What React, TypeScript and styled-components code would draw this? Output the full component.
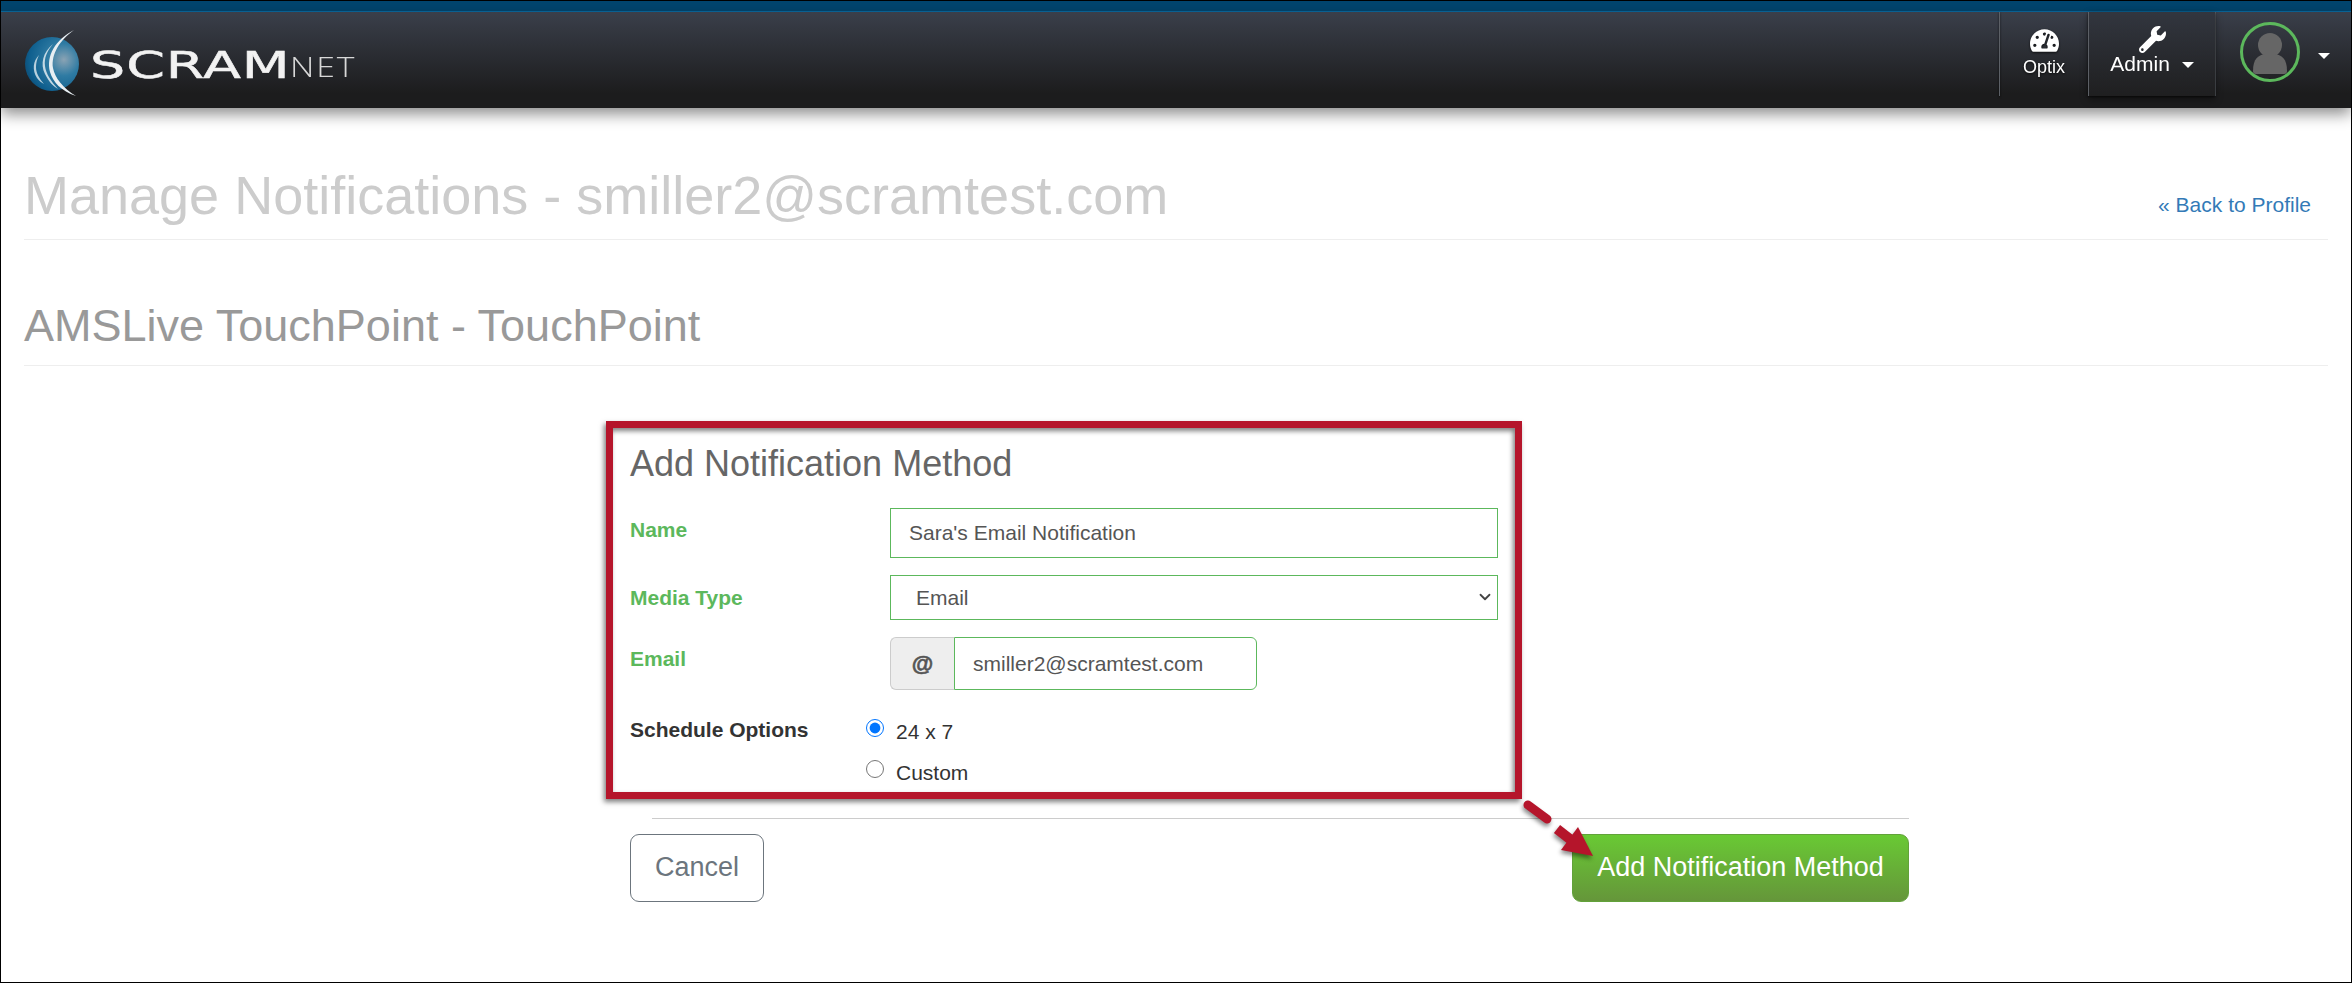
import { ChevronDown } from "lucide-react";
import { FaTachometerAlt, FaWrench } from "react-icons/fa";
import styled, { createGlobalStyle } from "styled-components";

const Global = createGlobalStyle`
  html, body {
    margin: 0;
    height: 100%;
    background: #fff;
    overflow: hidden;
  }
  * { box-sizing: border-box; }
  body {
    font-family: "Liberation Sans", Arial, sans-serif;
  }
`;

const Logo = () => (
  <LogoMark viewBox="0 0 64 72" width="64" height="72">
    <defs>
      <radialGradient id="globe" cx="0.72" cy="0.42" r="0.85">
        <stop offset="0" stopColor="#8aa3b4" />
        <stop offset="0.35" stopColor="#2f7ba3" />
        <stop offset="0.75" stopColor="#0f5f8e" />
        <stop offset="1" stopColor="#0a3f63" />
      </radialGradient>
    </defs>
    <circle cx="27" cy="38" r="27" fill="url(#globe)" />
    <path d="M49 4 C30 14 21 30 25 46 C28 56 36 65 51 70 C38 62 30 52 28 42 C26 28 35 14 49 4Z" fill="#e8eef2" />
    <path d="M28 18 C18 26 15 38 20 48 C24 56 28 60 33 63 C26 55 21 48 20 40 C19 32 22 25 28 18Z" fill="#c4d9e4" />
    <path d="M14 29 C8 35 7 44 12 52 C14 55 17 57 19 58 C14 52 11 47 11 41 C11 37 12 33 14 29Z" fill="#b8d0dd" />
  </LogoMark>
);

export default function App() {
  return (
    <Frame>
      <Global />
      <TopStripe />
      <Header>
        <Brand>
          <Logo />
          <BrandName>SCRAM</BrandName>
          <BrandSuffix>NET</BrandSuffix>
        </Brand>
        <Nav>
          <NavItem $width={89}>
            <FaTachometerAlt size={29} />
            <NavSmall>Optix</NavSmall>
          </NavItem>
          <NavItem $width={127} $dark>
            <FaWrench size={27} />
            <NavLabel>
              Admin <Caret />
            </NavLabel>
          </NavItem>
          <UserItem>
            <Avatar>
              <svg viewBox="0 0 54 54" width="54" height="54">
                <circle cx="27" cy="20" r="12" fill="#666" />
                <path d="M10 46 C10 34 15 30 22 29 L32 29 C39 30 44 34 44 46 C44 48 43 49 41 49 L13 49 C11 49 10 48 10 46Z" fill="#666" />
              </svg>
            </Avatar>
            <Caret />
          </UserItem>
        </Nav>
      </Header>

      <Main>
        <PageHead>
          <PageTitle>Manage Notifications - smiller2@scramtest.com</PageTitle>
          <BackLink href="#">« Back to Profile</BackLink>
        </PageHead>
        <SectionHead>
          <SectionTitle>AMSLive TouchPoint - TouchPoint</SectionTitle>
        </SectionHead>

        <FormBox>
          <FormTitle>Add Notification Method</FormTitle>
          <Row>
            <FieldLabel $shift={-6}>Name</FieldLabel>
            <TextInput defaultValue="Sara's Email Notification" />
          </Row>
          <Row>
            <FieldLabel $shift={0}>Media Type</FieldLabel>
            <SelectWrap>
              <Select defaultValue="Email">
                <option>Email</option>
              </Select>
              <SelectIcon>
                <ChevronDown size={18} strokeWidth={2.4} />
              </SelectIcon>
            </SelectWrap>
          </Row>
          <Row>
            <FieldLabel $shift={-10}>Email</FieldLabel>
            <InputGroup>
              <Addon>@</Addon>
              <GroupInput defaultValue="smiller2@scramtest.com" />
            </InputGroup>
          </Row>
          <ScheduleRow>
            <ScheduleLabel>Schedule Options</ScheduleLabel>
            <RadioList>
              <RadioItem>
                <Radio type="radio" name="schedule" defaultChecked />
                <RadioText>24 x 7</RadioText>
              </RadioItem>
              <RadioItem>
                <Radio type="radio" name="schedule" />
                <RadioText>Custom</RadioText>
              </RadioItem>
            </RadioList>
          </ScheduleRow>
        </FormBox>

        <Footer>
          <ArrowMark viewBox="0 0 80 66" width="80" height="66">
            <path d="M5 6 L24 20" stroke="#b5152b" strokeWidth="9" strokeLinecap="round" fill="none" />
            <path d="M34 30 L52 44" stroke="#b5152b" strokeWidth="10" fill="none" />
            <path d="M70 57 L55 28 L38 51Z" fill="#b5152b" />
          </ArrowMark>
          <Divider />
          <Actions>
            <CancelButton>Cancel</CancelButton>
            <SubmitButton>Add Notification Method</SubmitButton>
          </Actions>
        </Footer>
      </Main>
    </Frame>
  );
}

const Frame = styled.div`
  position: relative;
  height: 983px;
  width: 2352px;
  border: 1px solid #000;
  overflow: hidden;
`;

const TopStripe = styled.div`
  height: 11px;
  background: #02456e;
  border-bottom: 1px solid #0a6a9f;
`;

const Header = styled.header`
  position: relative;
  height: 96px;
  display: flex;
  justify-content: space-between;
  background: linear-gradient(#3a3f4a, #1c1c1d 85%);
  box-shadow: 0 6px 14px rgba(0, 0, 0, 0.45);
  color: #fff;
`;

const Brand = styled.div`
  display: flex;
  align-items: flex-start;
  padding: 14px 0 0 24px;
`;

const LogoMark = styled.svg`
  display: block;
  flex: none;
  filter: blur(0.4px);
`;

const BrandName = styled.span`
  display: inline-block;
  margin: 18px 65px 0 1px;
  font-family: "DejaVu Sans", sans-serif;
  font-size: 37px;
  line-height: 44px;
  letter-spacing: 0.6px;
  color: #f2f2f2;
  -webkit-text-stroke: 0.5px #f2f2f2;
  transform: scaleX(1.5);
  transform-origin: left center;
  white-space: nowrap;
`;

const BrandSuffix = styled.span`
  display: inline-block;
  margin: 23px 0 0 1px;
  font-family: "Open Sans", sans-serif;
  font-weight: 300;
  font-size: 27px;
  line-height: 36px;
  letter-spacing: 1.5px;
  color: #d8d8d8;
  transform: scaleX(1.25);
  transform-origin: left center;
`;

const Nav = styled.nav`
  display: flex;
  align-items: stretch;
  height: 84px;
`;

const NavItem = styled.div<{ $width: number; $dark?: boolean }>`
  width: ${(p) => p.$width}px;
  display: flex;
  flex-direction: column;
  align-items: center;
  padding-top: 14px;
  border-left: 1px solid #5c6066;
  background: ${(p) => (p.$dark ? "linear-gradient(#32363f, #1f1f20)" : "transparent")};
  box-shadow: ${(p) => (p.$dark ? "0 3px 8px rgba(0, 0, 0, 0.25)" : "none")};
  filter: drop-shadow(0 1px 1px rgba(0, 0, 0, 0.7));
`;

const NavSmall = styled.span`
  font-size: 18px;
  line-height: 22px;
  margin-top: 1px;
`;

const NavLabel = styled.span`
  font-size: 21px;
  line-height: 24px;
  margin-top: -1px;
  white-space: nowrap;
`;

const Caret = styled.i`
  display: inline-block;
  width: 0;
  height: 0;
  margin-left: 6px;
  vertical-align: 3px;
  border-top: 6px solid #fff;
  border-left: 6px solid transparent;
  border-right: 6px solid transparent;
`;

const UserItem = styled.div`
  width: 136px;
  display: flex;
  align-items: flex-start;
  padding: 10px 0 0 24px;
  border-left: 1px solid #5c6066;

  ${Caret} {
    margin: 31px 0 0 18px;
  }
`;

const Avatar = styled.div`
  width: 60px;
  height: 60px;
  border-radius: 50%;
  border: 3px solid #5cb85c;
  flex: none;
`;

const Main = styled.main`
  padding: 0 23px;
`;

const PageHead = styled.div`
  height: 132px;
  display: flex;
  justify-content: space-between;
  align-items: flex-start;
  padding: 57px 17px 0 0;
  border-bottom: 1px solid #eee;
`;

const PageTitle = styled.h1`
  margin: 0;
  font-size: 54px;
  line-height: 60px;
  font-weight: 400;
  color: #ccc;
`;

const BackLink = styled.a`
  margin-top: 28px;
  font-size: 21px;
  line-height: 24px;
  color: #337ab7;
  text-decoration: none;
`;

const SectionHead = styled.div`
  height: 126px;
  padding-top: 62px;
  border-bottom: 1px solid #eee;
`;

const SectionTitle = styled.h2`
  margin: 0;
  font-size: 45px;
  line-height: 48px;
  font-weight: 400;
  color: #999;
`;

const FormBox = styled.section`
  width: 916px;
  height: 378px;
  margin: 55px 0 0 582px;
  padding: 9px 17px 0;
  border: 7px solid #b5152b;
  box-shadow: -2px 3px 5px rgba(0, 0, 0, 0.5), inset -2px 3px 5px rgba(0, 0, 0, 0.5);
`;

const FormTitle = styled.h3`
  margin: 0 0 17px;
  font-size: 36px;
  line-height: 54px;
  font-weight: 400;
  color: #666;
`;

const Row = styled.div`
  display: grid;
  grid-template-columns: 260px 608px;
  align-items: center;
  margin-bottom: 17px;
`;

const FieldLabel = styled.label<{ $shift: number }>`
  font-size: 21px;
  font-weight: 700;
  line-height: 24px;
  color: #5cb85c;
  margin-top: ${(p) => p.$shift}px;
`;

const TextInput = styled.input`
  width: 100%;
  height: 50px;
  padding: 0 18px;
  border: 1px solid #5cb85c;
  outline: none;
  font: 21px "Liberation Sans", Arial, sans-serif;
  color: #555;
`;

const SelectWrap = styled.div`
  position: relative;
  height: 45px;
`;

const Select = styled.select`
  width: 100%;
  height: 100%;
  padding: 0 0 0 25px;
  appearance: none;
  background: #fff;
  border: 1px solid #5cb85c;
  border-radius: 0;
  outline: none;
  font: 21px "Liberation Sans", Arial, sans-serif;
  color: #555;
`;

const SelectIcon = styled.span`
  position: absolute;
  right: 4px;
  top: 13px;
  display: flex;
  color: #444;
`;

const InputGroup = styled.div`
  display: flex;
  width: 367px;
  height: 53px;
`;

const Addon = styled.span`
  width: 64px;
  display: flex;
  align-items: center;
  justify-content: center;
  background: #eee;
  border: 1px solid #ccc;
  border-right: 0;
  border-radius: 6px 0 0 6px;
  font-size: 22px;
  font-weight: 700;
  color: #555;
  -webkit-text-stroke: 0.6px #555;
`;

const GroupInput = styled.input`
  flex: 1;
  min-width: 0;
  padding: 0 18px;
  border: 1px solid #5cb85c;
  border-radius: 0 6px 6px 0;
  outline: none;
  font: 21px "Liberation Sans", Arial, sans-serif;
  color: #555;
`;

const ScheduleRow = styled.div`
  display: grid;
  grid-template-columns: 236px 1fr;
  margin-top: 28px;
`;

const ScheduleLabel = styled.span`
  font-size: 21px;
  font-weight: 700;
  line-height: 24px;
  color: #333;
`;

const RadioList = styled.div`
  display: flex;
  flex-direction: column;
  gap: 17px;
`;

const RadioItem = styled.label`
  display: flex;
  align-items: flex-start;
  height: 24px;
`;

const Radio = styled.input`
  width: 18px;
  height: 18px;
  margin: 1px 12px 0 0;
  flex: none;
`;

const RadioText = styled.span`
  font-size: 21px;
  line-height: 24px;
  margin-top: 2px;
  color: #333;
`;

const Footer = styled.div`
  position: relative;
  margin-left: 606px;
  padding-top: 19px;
  width: 1279px;
`;

const ArrowMark = styled.svg`
  position: absolute;
  left: 893px;
  top: 0;
  z-index: 1;
  filter: drop-shadow(-1px 3px 2px rgba(0, 0, 0, 0.45));
`;

const Divider = styled.hr`
  margin: 0 0 15px 22px;
  border: 0;
  border-top: 1px solid #ccc;
`;

const Actions = styled.div`
  display: flex;
  justify-content: space-between;
`;

const CancelButton = styled.button`
  width: 134px;
  height: 68px;
  padding: 0 0 2px;
  background: #fff;
  border: 1px solid #6c757d;
  border-radius: 9px;
  font: 27px "Liberation Sans", Arial, sans-serif;
  color: #6c757d;
`;

const SubmitButton = styled.button`
  width: 337px;
  height: 68px;
  padding: 0 0 2px;
  background: linear-gradient(#69c934, #65963a);
  border: 1px solid #62a23a;
  border-radius: 9px;
  font: 27px "Liberation Sans", Arial, sans-serif;
  color: #fff;
`;
